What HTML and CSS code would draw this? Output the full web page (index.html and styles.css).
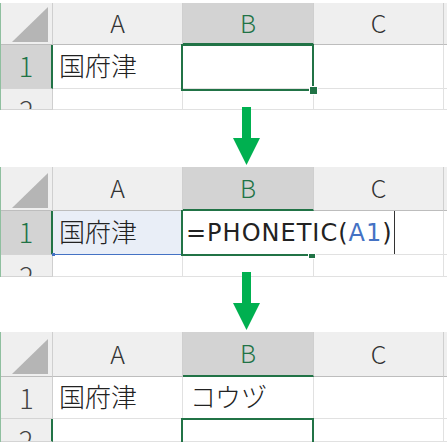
FILE: index.html
```html
<!DOCTYPE html>
<html lang="ja">
<head>
<meta charset="utf-8">
<link rel="stylesheet" href="styles.css">
</head>
<body>
<div class="page">
  <div class="sheet s1">
    <div class="corner"><svg class="tri" viewBox="0 0 37 36" width="37" height="36"><polygon points="0,35 36,35 36,0" fill="#b5b5b5"/></svg></div>
    <div class="ch"><span>A</span></div>
    <div class="ch on"><span>B</span></div>
    <div class="ch"><span>C</span></div>
    <div class="ch end"></div>

    <div class="rh on"><span>1</span></div>
    <div class="c"><span class="t">国府津</span></div>
    <div class="c"></div>
    <div class="c"></div>
    <div class="c end"></div>

    <div class="rh"><span>2</span></div>
    <div class="c"></div>
    <div class="c"></div>
    <div class="c"></div>
    <div class="c end"></div>

    <div class="sel"><span class="handle"></span></div>
  </div>

  <div class="sheet s2">
    <div class="corner"><svg class="tri" viewBox="0 0 37 36" width="37" height="36"><polygon points="0,35 36,35 36,0" fill="#b5b5b5"/></svg></div>
    <div class="ch"><span>A</span></div>
    <div class="ch on"><span>B</span></div>
    <div class="ch"><span>C</span></div>
    <div class="ch end"></div>

    <div class="rh on"><span>1</span></div>
    <div class="c ref"><span class="t">国府津</span></div>
    <div class="c edit"><span class="formula">=PHONETIC(<span class="refa">A1</span>)</span></div>
    <div class="c"></div>
    <div class="c end"></div>

    <div class="rh"><span>2</span></div>
    <div class="c"></div>
    <div class="c"></div>
    <div class="c"></div>
    <div class="c end"></div>

    <div class="sel"><span class="handle"></span></div>
  </div>

  <div class="sheet s3">
    <div class="corner"><svg class="tri" viewBox="0 0 37 36" width="37" height="36"><polygon points="0,35 36,35 36,0" fill="#b5b5b5"/></svg></div>
    <div class="ch"><span>A</span></div>
    <div class="ch on"><span>B</span></div>
    <div class="ch"><span>C</span></div>
    <div class="ch end"></div>

    <div class="rh"><span>1</span></div>
    <div class="c"><span class="t">国府津</span></div>
    <div class="c"><span class="t kana">コウヅ</span></div>
    <div class="c"></div>
    <div class="c end"></div>

    <div class="rh on"><span>2</span></div>
    <div class="c"></div>
    <div class="c"></div>
    <div class="c"></div>
    <div class="c end"></div>

    <div class="sel"></div>
  </div>

  <svg class="arrow a1" viewBox="0 0 28 59" width="28" height="59"><rect x="9" y="0" width="9" height="32" fill="#00b050"/><polygon points="0,31 27,31 13.5,58" fill="#00b050"/></svg>
  <svg class="arrow a2" viewBox="0 0 28 59" width="28" height="59"><rect x="9" y="0" width="9" height="32" fill="#00b050"/><polygon points="0,31 27,31 13.5,58" fill="#00b050"/></svg>
</div>
</body>
</html>
```
FILE: styles.css
```css
* { box-sizing: border-box; }
html, body { margin: 0; padding: 0; background: #fff; }
body { width: 447px; height: 442px; overflow: hidden; font-family: "Noto Sans CJK JP", "Noto Sans", sans-serif; font-weight: 300; color: #222; }

.page { position: relative; width: 447px; height: 442px; }

.sheet {
  position: relative;
  display: grid;
  grid-template-columns: 52px 130px 131px 130px 1fr;
  border-left: 1px solid #8fbf9f;
  overflow: hidden;
}
.s1 { margin-top: 3px; height: 107px; grid-template-rows: 42px 44px 21px; }
.s2 { margin-top: 57px; height: 110px; grid-template-rows: 44px 44px 22px; }
.s3 { margin-top: 55px; height: 110px; grid-template-rows: 45px 42px 23px; }

.corner {
  background: #efefef;
  border-right: 1px solid #cfcfcf;
  border-bottom: 1px solid #bdbdbd;
  display: flex;
  justify-content: flex-end;
  align-items: flex-end;
  padding: 0 3px 1px 0;
}
.tri { display: block; }

.ch {
  background: #efefef;
  border-right: 1px solid #cfcfcf;
  border-bottom: 1px solid #bdbdbd;
  display: flex;
  align-items: center;
  justify-content: center;
  font-size: 25px;
  line-height: 1;
  color: #333;
}
.ch span { position: relative; top: -1px; }
.ch.on { background: #d3d3d3; color: #217346; border-bottom: 2px solid #217346; }
.ch.end { border-right: none; }

.rh {
  background: #efefef;
  border-right: 1px solid #cfcfcf;
  border-bottom: 1px solid #d4d4d4;
  overflow: hidden;
  color: #444;
  font-size: 27px;
  line-height: 1;
}
.rh span { display: flex; height: 44px; align-items: center; justify-content: center; position: relative; top: -2px; }
.rh.on { background: #d3d3d3; color: #217346; border-right: 2px solid #217346; }
.s3 .rh.on { background: #efefef; color: #444; }

.c {
  border-right: 1px solid #e1e1e1;
  border-bottom: 1px solid #e1e1e1;
  position: relative;
  display: flex;
  align-items: center;
  padding-left: 6px;
}
.c.end { border-right: none; }
.t { font-size: 26px; line-height: 1; color: #222; position: relative; top: -2px; }
.kana { left: 1px; }

.ref { background: #e9eef7; border-bottom: 1px solid #4472c4; }
.ref::before, .ref::after {
  content: "";
  position: absolute;
  bottom: -2px;
  width: 3px;
  height: 3px;
  background: #4472c4;
}
.ref::before { left: -1px; }
.ref::after { right: -2px; }

.edit { overflow: visible; padding-left: 0; }
.formula {
  position: relative;
  z-index: 1;
  flex-shrink: 0;
  align-self: stretch;
  display: flex;
  align-items: center;
  width: 212px;
  background: #fff;
  border-right: 1px solid #333;
  padding-left: 3px;
  font-family: "DejaVu Sans", sans-serif;
  font-weight: 400;
  font-size: 24px;
  letter-spacing: 1px;
  white-space: nowrap;
  color: #222;
  line-height: 1;
}
.refa { color: #4472c4; }

.sel {
  position: absolute;
  z-index: 2;
  border: 2px solid #217346;
}
.handle {
  position: absolute;
  width: 9px;
  height: 9px;
  background: #217346;
  border: 1px solid #fff;
}
.s1 .sel { left: 180px; top: 41px; width: 133px; height: 47px; }
.s1 .handle { right: -6px; bottom: -6px; }
.s2 .sel { left: 180px; top: 43px; width: 133px; height: 46px; border-right: none; border-top: none; }
.s2 .handle { right: -2px; bottom: -5px; width: 8px; height: 6px; }
.s3 .sel { left: 180px; top: 86px; width: 133px; height: 40px; }

.arrow { position: absolute; left: 233px; }
.a1 { top: 104px; }
.a2 { top: 269px; }
```
